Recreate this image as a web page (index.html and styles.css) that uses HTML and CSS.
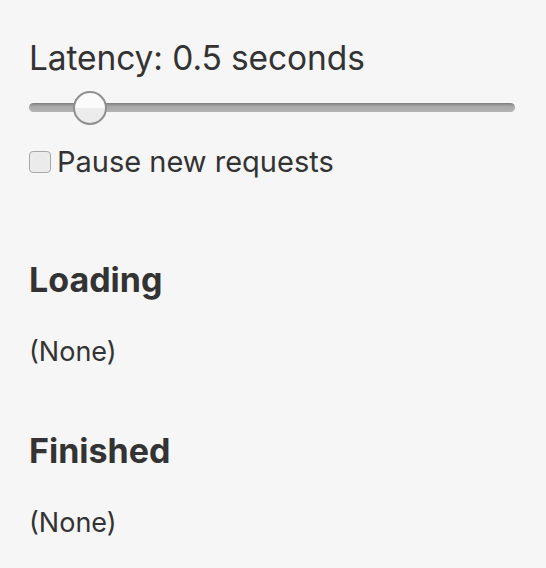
FILE: index.html
```html
<!DOCTYPE html>
<html>
<head>
<meta charset="utf-8">
<link rel="stylesheet" href="styles.css">
</head>
<body>
<div class="page">
  <div class="latency">Latency: 0.5 seconds</div>
  <div class="slider">
    <div class="track"></div>
    <div class="thumb"></div>
  </div>
  <label class="pause"><span class="box"></span><span>Pause new requests</span></label>
  <h2 class="heading first">Loading</h2>
  <p class="none">(None)</p>
  <h2 class="heading">Finished</h2>
  <p class="none">(None)</p>
</div>
</body>
</html>
```
FILE: styles.css
```css
html, body {
  margin: 0;
  padding: 0;
  background: #f6f6f6;
}
body {
  font-family: Inter, "Noto Sans", sans-serif;
  color: #333333;
}
.page {
  padding: 36px 31px 0 29px;
}
.latency {
  font-size: 33.5px;
  line-height: 44px;
  letter-spacing: -0.1px;
}
.slider {
  position: relative;
  height: 36px;
  margin-top: 10px;
}
.track {
  position: absolute;
  left: 0;
  right: 0;
  top: 13px;
  height: 9px;
  border-radius: 5px;
  background: linear-gradient(#7e7e7e, #a9a9a9 40%, #b4b4b4);
}
.thumb {
  position: absolute;
  left: 44px;
  top: 1px;
  width: 30px;
  height: 30px;
  border-radius: 50%;
  border: 2px solid #8f8f8f;
  background: linear-gradient(#fbfbfb 50%, #ececec 50%);
}
.pause {
  display: flex;
  align-items: center;
  gap: 6px;
  margin-top: 18px;
  font-size: 29px;
  line-height: 36px;
}
.box {
  width: 22px;
  height: 22px;
  border: 1.5px solid #a8a8a8;
  border-radius: 4px;
  background: #ebebeb;
  box-sizing: border-box;
}
.heading {
  margin: 0;
  font-size: 34px;
  font-weight: 700;
  line-height: 40px;
  margin-top: 62px;
}
.heading.first {
  margin-top: 80px;
}
.none {
  margin: 35px 0 0;
  font-size: 27px;
  line-height: 34px;
}
```
